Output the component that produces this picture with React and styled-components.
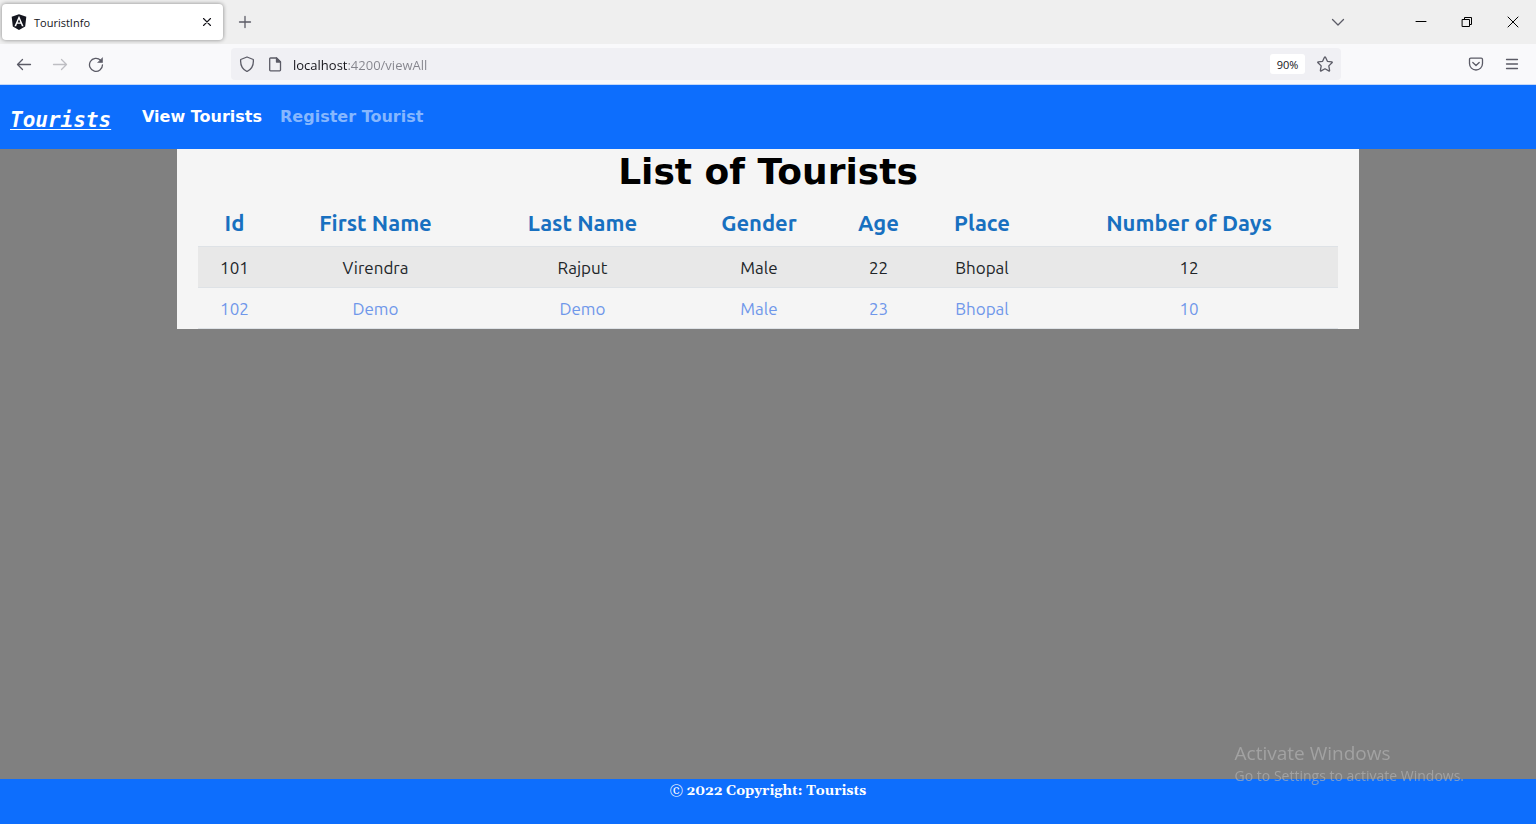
import React from "react";
import styled, { createGlobalStyle } from "styled-components";
import { FaAngular } from "react-icons/fa";

const ui = `"Segoe UI", "Open Sans", "Noto Sans", sans-serif`;
const wide = `"DejaVu Sans", sans-serif`;

const GlobalStyle = createGlobalStyle`
  *, *::before, *::after { box-sizing: border-box; }
  body { margin: 0; background: #808080; font-family: Ubuntu, "Noto Sans", sans-serif; }
  button { font: inherit; border: 0; padding: 0; background: none; color: inherit; }
`;

const Screen = styled.div`
  display: flex;
  flex-direction: column;
  min-height: 100vh;
`;

const TabStrip = styled.div`
  display: flex;
  align-items: center;
  height: 44px;
  padding-left: 2px;
  background: #efefef;
  font-family: ${ui};
`;

const Tab = styled.div`
  display: flex;
  align-items: center;
  gap: 6px;
  width: 221px;
  height: 36px;
  padding: 0 8px;
  border-radius: 4px;
  background: #fff;
  box-shadow: 0 0 4px rgba(0, 0, 0, 0.45);
  color: #15141a;
  font-size: 11px;
`;

const TabTitle = styled.span`
  flex: 1;
`;

const IconButton = styled.button`
  display: flex;
  align-items: center;
  justify-content: center;
  flex: none;
  width: ${(p) => p.$width || 36}px;
  height: ${(p) => p.$height || 32}px;
  color: ${(p) => p.$color || "#5b5b66"};
`;

const WindowControls = styled.div`
  display: flex;
  gap: ${(p) => p.$gap || 0}px;
  margin-left: auto;
`;

const Toolbar = styled.div`
  display: flex;
  align-items: center;
  height: 41px;
  padding: 0 6px;
  background: #f9f9fb;
  border-bottom: 1px solid #c4d8f8;
  font-family: ${ui};
`;

const Spacer = styled.div`
  flex: 0 1 117px;
`;

const UrlBar = styled.div`
  display: flex;
  align-items: center;
  flex: 1;
  height: 32px;
  border-radius: 4px;
  background: #f0f0f4;
`;

const UrlInput = styled.input`
  flex: 1;
  min-width: 0;
  height: 24px;
  padding: 1px 0 0;
  margin-left: 6px;
  border: 0;
  outline: 0;
  color: #15141a;
  font: 13px ${ui};
  background: linear-gradient(90deg, #15141a 55px, #84848c 55px);
  background-clip: text;
  -webkit-background-clip: text;
  -webkit-text-fill-color: transparent;
`;

const Zoom = styled.button`
  width: 35px;
  height: 20px;
  margin-right: 4px;
  border-radius: 3px;
  && { background: #fff; }
  color: #15141a;
  font-size: 11px;
`;

const Navbar = styled.nav`
  display: flex;
  align-items: center;
  height: 64px;
  padding: 0 10px;
  background: #0d6efd;
`;

const Brand = styled.a`
  width: 132px;
  padding-top: 6px;
  color: #fff;
  font: italic 700 21px/24px "DejaVu Sans Mono", monospace;
  text-decoration: underline;
  text-decoration-thickness: 1px;
  text-underline-offset: 2px;
`;

const NavLinks = styled.div`
  display: flex;
  gap: 18px;
  padding-bottom: 2px;
`;

const NavLink = styled.a`
  color: ${(p) => (p.$active ? "#fff" : "#86b7fe")};
  font: 700 16px ${wide};
  text-decoration: none;
`;

const Main = styled.main`
  flex: 1;
`;

const Panel = styled.section`
  width: 100%;
  max-width: 1182px;
  margin: 0 auto;
  padding: 0 21px;
  background: #f5f5f5;
`;

const Title = styled.h1`
  margin: 0;
  color: #000;
  font: 700 36px/46px ${wide};
  text-align: center;
`;

const Table = styled.table`
  width: 100%;
  table-layout: fixed;
  border-collapse: separate;
  border-spacing: 0;
  text-align: center;
`;

const HeadCell = styled.th`
  height: 52px;
  padding: 4px 0 0;
  border-bottom: 1px solid #dee2e6;
  color: #1870c0;
  font-size: 22px;
  font-weight: 600;
  line-height: 28px;
`;

const Row = styled.tr`
  background: ${(p) => (p.$shaded ? "#e8e8e8" : "transparent")};
  color: ${(p) => (p.$shaded ? "#212529" : "#6f97ea")};
`;

const Cell = styled.td`
  height: 41px;
  padding: 2px 0 0;
  border-bottom: 1px solid #dee2e6;
  font-size: 17px;
  line-height: 24px;
`;

const Footer = styled.footer`
  height: 45px;
  background: #0d6efd;
  color: #fff;
  font: 700 14px/24px Gelasio, "DejaVu Serif", serif;
  text-align: center;
`;

const Watermark = styled.div`
  position: fixed;
  right: 72px;
  bottom: 38px;
  color: rgba(180, 180, 180, 0.65);
  font: 14px/20px ${ui};
  pointer-events: none;
`;

const WatermarkTitle = styled.div`
  font-size: 19px;
  line-height: 26px;
`;

const Icon = ({ size = 16, width = 1.3, children }) => (
  <svg
    width={size}
    height={size}
    viewBox={`0 0 ${size} ${size}`}
    fill="none"
    stroke="currentColor"
    strokeWidth={width}
    strokeLinecap="round"
    strokeLinejoin="round"
    aria-hidden="true"
  >
    {children}
  </svg>
);

const columns = [
  ["Id", 73],
  ["First Name", 209],
  ["Last Name", 205],
  ["Gender", 148],
  ["Age", 91],
  ["Place", 116],
  ["Number of Days", 298],
];

const tourists = [
  [101, "Virendra", "Rajput", "Male", 22, "Bhopal", 12],
  [102, "Demo", "Demo", "Male", 23, "Bhopal", 10],
];

function BrowserChrome() {
  return (
    <header>
      <TabStrip>
        <Tab>
          <FaAngular size={18} color="#14161f" />
          <TabTitle>TouristInfo</TabTitle>
          <IconButton $width={16} $height={16} $color="#15141a" aria-label="Close tab">
            <Icon width={1.1}><path d="M4.500 4.500l7 7M11.500 4.500l-7 7" /></Icon>
          </IconButton>
        </Tab>
        <IconButton $width={44} aria-label="New tab">
          <Icon><path d="M8 2.5v11M2.5 8h11" /></Icon>
        </IconButton>
        <WindowControls $gap={40}>
          <IconButton $width={40} aria-label="List all tabs">
            <Icon><path d="M2.5 5.5L8 11l5.5-5.5" /></Icon>
          </IconButton>
          <WindowControls>
            <IconButton $width={46} $color="#000" aria-label="Minimize">
              <Icon width={1}><path d="M3 7.5h10" /></Icon>
            </IconButton>
            <IconButton $width={46} $color="#000" aria-label="Restore">
              <Icon width={1}><path d="M3.5 5.5h7v7h-7zM5.5 5.5v-2h7v7h-2" /></Icon>
            </IconButton>
            <IconButton $width={46} $color="#000" aria-label="Close">
              <Icon width={1}><path d="M3 3l10 10M13 3L3 13" /></Icon>
            </IconButton>
          </WindowControls>
        </WindowControls>
      </TabStrip>
      <Toolbar>
        <IconButton aria-label="Back">
          <Icon><path d="M14.5 8.5h-13M6.5 3.5l-5 5 5 5" /></Icon>
        </IconButton>
        <IconButton $color="#bebec3" aria-label="Forward">
          <Icon><path d="M1.5 8.5h13M9.5 3.5l5 5-5 5" /></Icon>
        </IconButton>
        <IconButton aria-label="Reload">
          <Icon>
            <path d="M12.600 4.200A6.500 6.500 0 1 0 14.500 8.800" />
            <path d="M14.500 2v4.500H10z" fill="currentColor" strokeWidth="0.6" />
          </Icon>
        </IconButton>
        <Spacer />
        <UrlBar>
          <IconButton $width={32} aria-label="Tracking protection">
            <Icon><path d="M8 1l6.300 2.500c.5 5.200-1.300 9.500-6.300 12C3 13 1.200 8.700 1.700 3.500z" /></Icon>
          </IconButton>
          <IconButton $width={24} aria-label="Site information">
            <Icon>
              <path d="M3.500 2h6l4 4v8q0 .8-.8.8H3.500q-.8 0-.8-.8V2.800q0-.8.8-.8z" />
              <path d="M9.500 2v4h4z" fill="currentColor" />
            </Icon>
          </IconButton>
          <UrlInput aria-label="Address" defaultValue="localhost:4200/viewAll" />
          <Zoom>90%</Zoom>
          <IconButton $width={32} aria-label="Bookmark this page">
            <Icon><path d="M7.500 1.300q.5-.9 1 0l1.900 4 4.300.6q1 .2.300.9l-3.200 3.100.8 4.400q.1 1-.8.600L8 12.800l-3.800 2.100q-.9.400-.8-.600l.8-4.400L1 6.800q-.7-.7.300-.9l4.300-.6z" /></Icon>
          </IconButton>
        </UrlBar>
        <Spacer />
        <IconButton aria-label="Save to Pocket">
          <Icon><path d="M2.800 2.200h10.400q1.300 0 1.300 1.300V7.500a6.500 6.500 0 0 1-13 0V3.500q0-1.300 1.300-1.300zM4.800 6.500L8 9.500l3.200-3" /></Icon>
        </IconButton>
        <IconButton aria-label="Open application menu">
          <Icon><path d="M2.500 3.500h11M2.500 8h11M2.500 12.500h11" /></Icon>
        </IconButton>
      </Toolbar>
    </header>
  );
}

export default function App() {
  return (
    <Screen>
      <GlobalStyle />
      <BrowserChrome />
      <Navbar>
        <Brand href="#home">Tourists</Brand>
        <NavLinks>
          <NavLink href="#viewAll" $active>View Tourists</NavLink>
          <NavLink href="#register">Register Tourist</NavLink>
        </NavLinks>
      </Navbar>
      <Main>
        <Panel>
          <Title>List of Tourists</Title>
          <Table>
            <colgroup>
              {columns.map(([name, width]) => <col key={name} width={width} />)}
            </colgroup>
            <thead>
              <tr>{columns.map(([name]) => <HeadCell key={name} scope="col">{name}</HeadCell>)}</tr>
            </thead>
            <tbody>
              {tourists.map((tourist, i) => (
                <Row key={tourist[0]} $shaded={i % 2 === 0}>
                  {tourist.map((value, j) => <Cell key={j}>{value}</Cell>)}
                </Row>
              ))}
            </tbody>
          </Table>
        </Panel>
      </Main>
      <Footer>© 2022 Copyright: Tourists</Footer>
      <Watermark>
        <WatermarkTitle>Activate Windows</WatermarkTitle>
        Go to Settings to activate Windows.
      </Watermark>
    </Screen>
  );
}
